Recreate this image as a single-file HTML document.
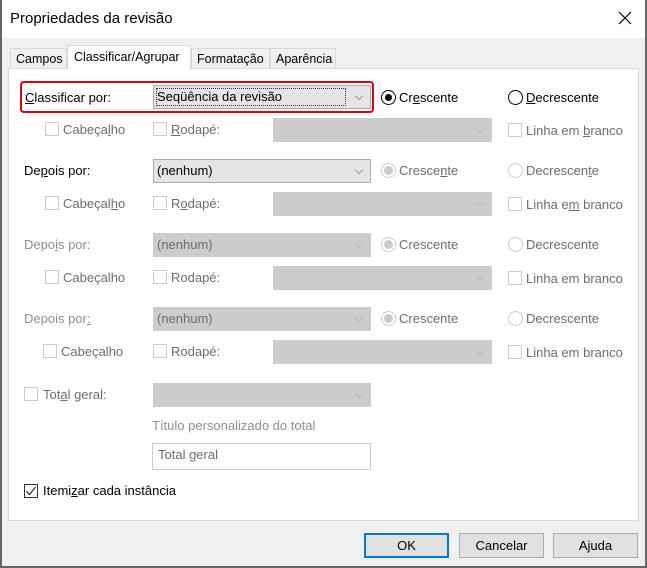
<!DOCTYPE html>
<html><head><meta charset="utf-8"><style>
*{box-sizing:border-box;margin:0;padding:0}
body{width:647px;height:568px;position:relative;overflow:hidden;background:#666;font-family:"Liberation Sans",sans-serif;font-size:13px;color:#000}
.win{position:absolute;left:2px;top:0;width:643px;height:566px;background:#f0f0f0}
.title{position:absolute;left:0;top:0;width:643px;height:38px;background:#fff}
.a{position:absolute;white-space:nowrap;line-height:16px}
.g{color:#6d6d6d}.lg{color:#8f8f8f}
.tab{position:absolute;top:48px;height:21px;border:1px solid #d9d9d9;border-bottom:none;background:#f0f0f0;padding:3px 0 0 5px;font-size:12.5px}
.panel{position:absolute;left:6px;top:68px;width:631px;height:453px;background:#fff;border:1px solid #d9d9d9}
.cb{position:absolute;border:1px solid #333;width:24px;height:24px;background:#e5e5e5;border-color:#adadad}
.dis{background:#ccc;border-color:#ccc}
.chk{position:absolute;width:14px;height:14px;border:1px solid #ccc;background:#fff}
.rad{position:absolute;width:15px;height:15px;border-radius:50%;border:1px solid #ccc;background:#fff}
.arrow{position:absolute;right:8px;top:7px;width:6px;height:6px;border-right:1px solid #999;border-bottom:1px solid #999;transform:rotate(45deg)}
.dis .arrow{border-color:#b5b5b5}
.btn{position:absolute;top:533px;height:25px;background:#e1e1e1;border:1px solid #adadad;text-align:center;line-height:23px}
u{text-decoration:underline}
</style></head><body>
<div class="win">
<div class="title"><div class="a" style="left:8px;top:10px;font-size:15px;line-height:18px">Propriedades da revisão</div>
<svg style="position:absolute;left:616px;top:11px" width="14" height="14"><path d="M1 1L13 13M13 1L1 13" stroke="#000" stroke-width="1.2"/></svg></div>
<div class="tab" style="left:8px;width:57px">Campos</div>
<div class="tab" style="left:189px;width:79px">Formatação</div>
<div class="tab" style="left:268px;width:66px">Aparência</div>
<div class="panel"></div>
<div class="tab" style="left:65px;top:45px;width:124px;height:25px;background:#fff;padding-top:4px;padding-left:6px">Classificar/Agrupar</div>
</div>
<div style="position:absolute;left:20px;top:81px;width:354px;height:32px;border:2px solid #e00010;border-radius:4px"></div>

<div class="a" style="left:25px;top:90px"><u>C</u>lassificar por:</div>
<div class="cb" style="left:153px;top:85px;width:218px"><div style="position:absolute;left:2px;top:2px;width:190px;height:18px;border:1px dotted #333"></div><div class="a" style="left:3px;top:3px">Seqüência da revisão</div><div class="arrow"></div></div>
<div class="rad" style="left:381px;top:90px;border-color:#000"><div style="position:absolute;left:3px;top:3px;width:7px;height:7px;border-radius:50%;background:#000"></div></div>
<div class="a" style="left:399px;top:90px">Cr<u>e</u>scente</div>
<div class="rad" style="left:508px;top:90px;border-color:#000"></div>
<div class="a" style="left:526px;top:90px"><u>D</u>ecrescente</div>

<div class="chk" style="left:45px;top:122px"></div><div class="a g" style="left:63px;top:122px">Cabeça<u>l</u>ho</div>
<div class="chk" style="left:153px;top:122px"></div><div class="a g" style="left:171px;top:122px"><u>R</u>odapé:</div>
<div class="cb dis" style="left:273px;top:118px;width:219px"><div class="arrow"></div></div>
<div class="chk" style="left:508px;top:123px"></div><div class="a g" style="left:526px;top:123px">Linha em <u>b</u>ranco</div>

<div class="a" style="left:24px;top:163px">De<u>p</u>ois por:</div>
<div class="cb" style="left:153px;top:159px;width:218px"><div class="a" style="left:3px;top:3px">(nenhum)</div><div class="arrow"></div></div>
<div class="rad" style="left:381px;top:163px;border-color:#ccc"><div style="position:absolute;left:2px;top:2px;width:9px;height:9px;border-radius:50%;background:#ccc"></div></div>
<div class="a g" style="left:399px;top:163px">Cresce<u>n</u>te</div>
<div class="rad" style="left:508px;top:163px"></div><div class="a g" style="left:526px;top:163px">Decrescen<u>t</u>e</div>
<div class="chk" style="left:45px;top:196px"></div><div class="a g" style="left:63px;top:196px">Cabeçal<u>h</u>o</div>
<div class="chk" style="left:153px;top:196px"></div><div class="a g" style="left:171px;top:196px">R<u>o</u>dapé:</div>
<div class="cb dis" style="left:273px;top:192px;width:219px"><div class="arrow"></div></div>
<div class="chk" style="left:508px;top:197px"></div><div class="a g" style="left:526px;top:197px">Linha e<u>m</u> branco</div>

<div class="a lg" style="left:24px;top:237px">Depo<u>i</u>s por:</div>
<div class="cb dis" style="left:153px;top:233px;width:218px"><div class="a g" style="left:3px;top:3px">(nenhum)</div><div class="arrow"></div></div>
<div class="rad" style="left:381px;top:237px"><div style="position:absolute;left:2px;top:2px;width:9px;height:9px;border-radius:50%;background:#ccc"></div></div>
<div class="a g" style="left:399px;top:237px">Crescente</div>
<div class="rad" style="left:508px;top:237px"></div><div class="a g" style="left:526px;top:237px">Decrescente</div>
<div class="chk" style="left:45px;top:270px"></div><div class="a g" style="left:63px;top:270px">Cabeçalho</div>
<div class="chk" style="left:153px;top:270px"></div><div class="a g" style="left:171px;top:270px">Rodapé:</div>
<div class="cb dis" style="left:273px;top:266px;width:219px"><div class="arrow"></div></div>
<div class="chk" style="left:508px;top:271px"></div><div class="a g" style="left:526px;top:271px">Linha em branco</div>

<div class="a lg" style="left:24px;top:311px">Depois por<u>:</u></div>
<div class="cb dis" style="left:153px;top:307px;width:218px"><div class="a g" style="left:3px;top:3px">(nenhum)</div><div class="arrow"></div></div>
<div class="rad" style="left:381px;top:311px"><div style="position:absolute;left:2px;top:2px;width:9px;height:9px;border-radius:50%;background:#ccc"></div></div>
<div class="a g" style="left:399px;top:311px">Crescente</div>
<div class="rad" style="left:508px;top:311px"></div><div class="a g" style="left:526px;top:311px">Decrescente</div>
<div class="chk" style="left:43px;top:344px"></div><div class="a g" style="left:61px;top:344px">Cabeçalho</div>
<div class="chk" style="left:153px;top:344px"></div><div class="a g" style="left:171px;top:344px">Rodapé:</div>
<div class="cb dis" style="left:273px;top:340px;width:219px"><div class="arrow"></div></div>
<div class="chk" style="left:508px;top:345px"></div><div class="a g" style="left:526px;top:345px">Linha em branco</div>

<div class="chk" style="left:24px;top:387px"></div><div class="a g" style="left:43px;top:387px">Tot<u>a</u>l geral:</div>
<div class="cb dis" style="left:153px;top:383px;width:218px"><div class="arrow"></div></div>
<div class="a lg" style="left:152px;top:418px">Título personalizado do total</div>
<div style="position:absolute;left:152px;top:443px;width:219px;height:27px;border:1px solid #ccc;background:#fff"></div>
<div class="a g" style="left:158px;top:447px">Total geral</div>

<div class="chk" style="left:24px;top:484px;border-color:#333"><svg width="12" height="12" style="position:absolute;left:0;top:0"><path d="M1.5 6.5L4.5 9.5L10.5 2" fill="none" stroke="#000" stroke-width="1"/></svg></div>
<div class="a" style="left:43px;top:483px">Itemi<u>z</u>ar cada instância</div>

<div class="btn" style="left:364px;width:85px;border:2px solid #0078d7;line-height:21px">OK</div>
<div class="btn" style="left:459px;width:85px">Cancelar</div>
<div class="btn" style="left:553px;width:85px">Ajuda</div>
</body></html>
